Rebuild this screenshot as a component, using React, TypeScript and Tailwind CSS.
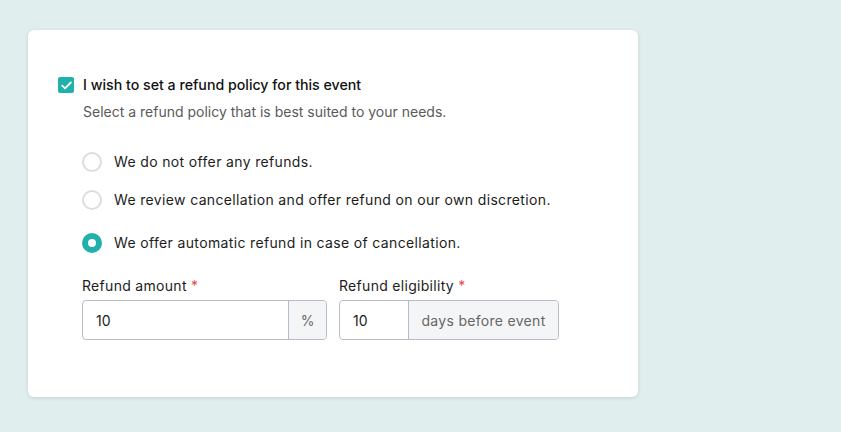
import React from "react";

function Radio({ checked, label }: { checked?: boolean; label: string }) {
  return (
    <div className="flex items-center gap-[12px]">
      {checked ? (
        <span className="w-[20px] h-[20px] rounded-full border-[6px] border-[#21b0aa] bg-white box-border" />
      ) : (
        <span className="w-[20px] h-[20px] rounded-full border-2 border-[#dcdde0] bg-white box-border" />
      )}
      <span className="text-[14px] leading-[20px] text-[#1c1c1c] tracking-[0.35px]">{label}</span>
    </div>
  );
}

export default function App() {
  return (
    <div
      className="w-[841px] h-[432px] bg-[#e0eeee] pt-[30px] pl-[28px]"
      style={{ fontFamily: "Inter, 'Noto Sans', sans-serif" }}
    >
      <div className="w-[610px] h-[367px] bg-white rounded-[6px] shadow-[0_1px_4px_rgba(0,0,0,0.12)] pt-[44px] pl-[30px]">
        <div className="flex items-center gap-[9px] h-[22px]">
          <span className="w-[16px] h-[16px] rounded-[2px] bg-[#21b0aa] flex items-center justify-center">
            <svg width="11" height="9" viewBox="0 0 11 9" fill="none">
              <path d="M1.2 4.6 L4 7.3 L9.8 1.5" stroke="white" strokeWidth="1.8" strokeLinecap="round" strokeLinejoin="round" />
            </svg>
          </span>
          <span className="text-[14.2px] text-[#111] font-medium">I wish to set a refund policy for this event</span>
        </div>
        <div className="ml-[25px] mt-[5px] text-[14px] text-[#5a5a5a]">
          Select a refund policy that is best suited to your needs.
        </div>
        <div className="ml-[24px] mt-[30px] flex flex-col">
          <Radio label="We do not offer any refunds." />
          <div className="h-[18px]" />
          <Radio label="We review cancellation and offer refund on our own discretion." />
          <div className="h-[23px]" />
          <Radio checked label="We offer automatic refund in case of cancellation." />
        </div>
        <div className="ml-[24px] mt-[22px] flex gap-[12px]">
          <div className="flex flex-col gap-[4px]">
            <div className="text-[14px] text-[#1c1c1c] tracking-[0.3px]">
              Refund amount <span className="text-[#e5484d]">*</span>
            </div>
            <div className="flex w-[245px] h-[40px] border border-[#b9bcc4] rounded-[4px] overflow-hidden">
              <div className="flex-1 flex items-center pl-[13px] text-[14px] text-[#1c1c1c]">10</div>
              <div className="w-[38px] flex items-center justify-center border-l border-[#b9bcc4] bg-[#f4f5f7] text-[14px] text-[#666]">%</div>
            </div>
          </div>
          <div className="flex flex-col gap-[4px]">
            <div className="text-[14px] text-[#1c1c1c] tracking-[0.3px]">
              Refund eligibility <span className="text-[#e5484d]">*</span>
            </div>
            <div className="flex w-[220px] h-[40px] border border-[#b9bcc4] rounded-[4px] overflow-hidden">
              <div className="w-[68px] flex items-center pl-[13px] text-[14px] text-[#1c1c1c]">10</div>
              <div className="flex-1 flex items-center justify-center border-l border-[#b9bcc4] bg-[#f4f5f7] text-[14px] text-[#666] tracking-[0.3px]">days before event</div>
            </div>
          </div>
        </div>
      </div>
    </div>
  );
}
